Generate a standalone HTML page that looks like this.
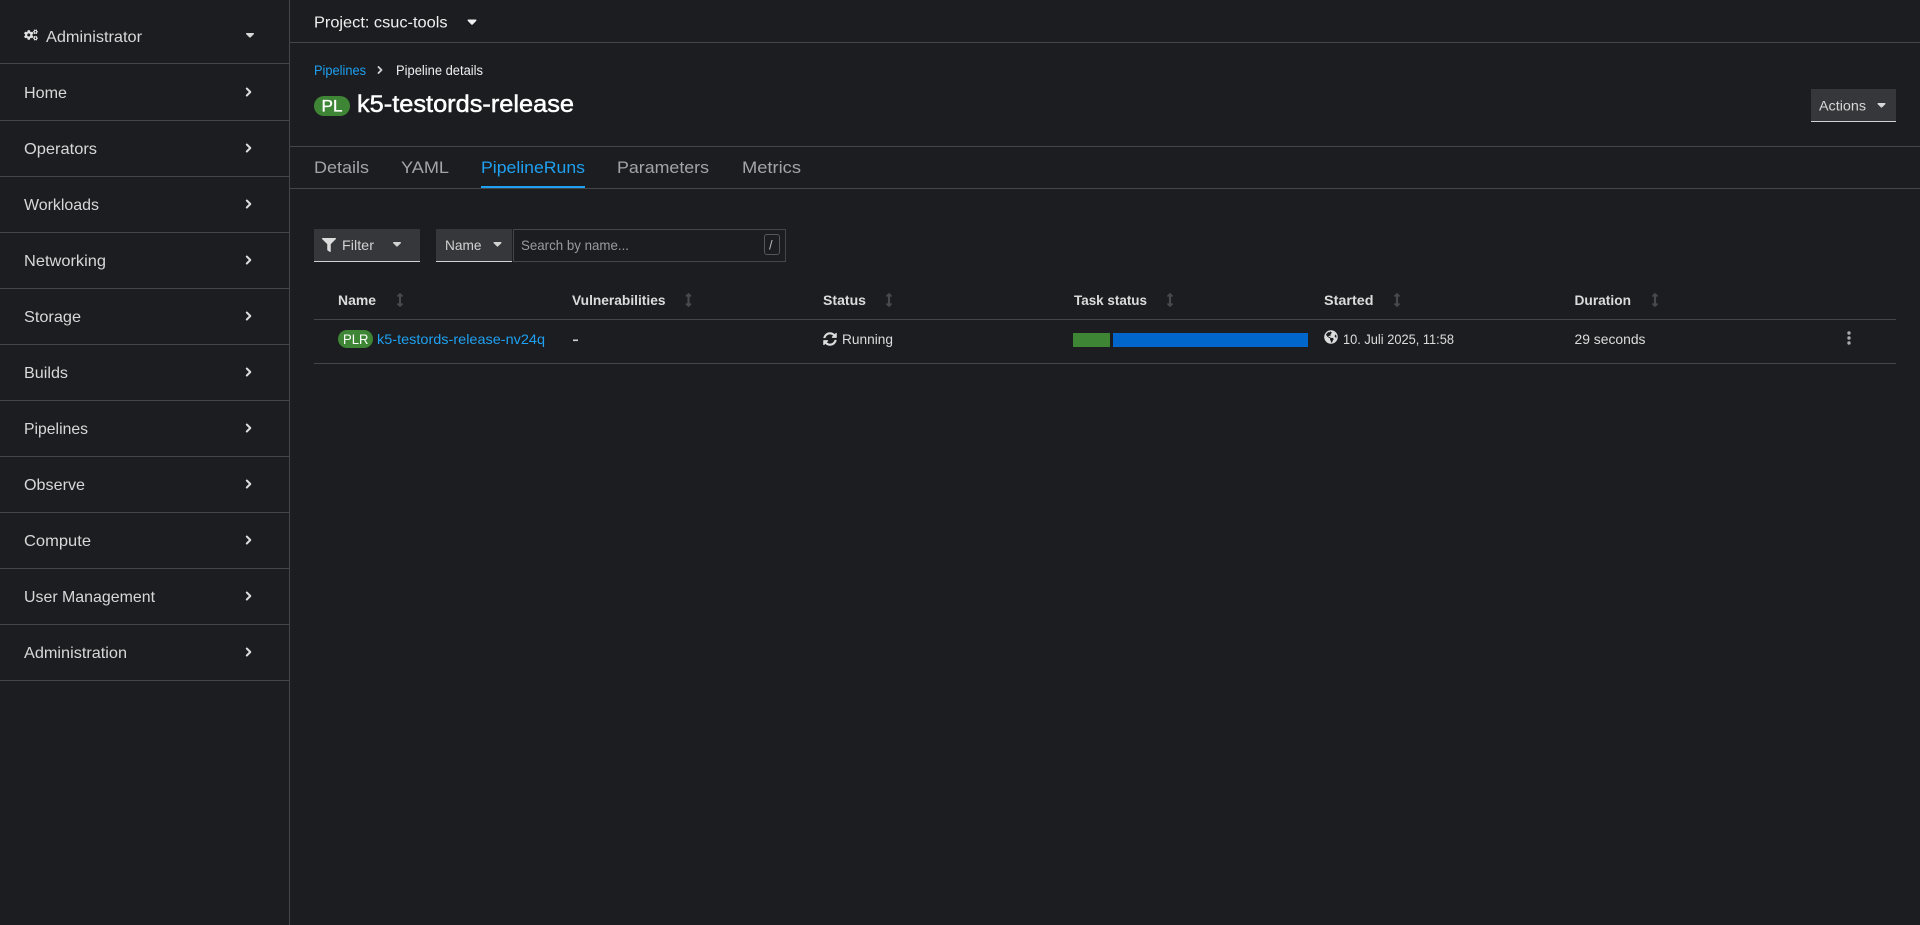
<!DOCTYPE html>
<html lang="en">
<head>
<meta charset="utf-8">
<title>k5-testords-release · Pipeline details</title>
<style>
html,body{margin:0;padding:0;background:#1b1d21;width:1920px;height:925px;overflow:hidden}
svg{display:block}
text{font-family:"Liberation Sans",sans-serif;font-size:16px;fill:#dcdcdc}
.nav{font-size:16px;fill:#d8d8d8}
.tab{font-size:17px;fill:#a3a4a6}
.th{font-size:13.5px;font-weight:700;fill:#dcdcdc}
.td{font-size:14px;fill:#dcdcdc}
.link{fill:#1fa0f0}
.line{stroke:#444548;stroke-width:1;fill:none;shape-rendering:crispEdges}
.chev{stroke:#dcdcdc;stroke-width:2;fill:none;stroke-linecap:round;stroke-linejoin:round}
</style>
</head>
<body>
<svg width="1920" height="925" viewBox="0 0 1920 925" xmlns="http://www.w3.org/2000/svg">
<defs>
<symbol id="caret" viewBox="0 0 10 6"><path d="M.9 0h8.2c.8 0 1.2 1 .6 1.500L5.600 5.700c-.3.4-.9.4-1.200 0L.3 1.500C-.3 1 .1 0 .9 0z" fill="currentColor"/></symbol>
<symbol id="sort" viewBox="0 0 256 512"><path fill="currentColor" d="M214.059 377.941H168V134.059h46.059c21.382 0 32.09-25.851 16.971-40.971L144.971 7.029c-9.373-9.373-24.569-9.373-33.941 0L24.971 93.088c-15.119 15.119-4.411 40.971 16.971 40.971H88v243.882H41.941c-21.382 0-32.09 25.851-16.971 40.971l86.059 86.059c9.373 9.373 24.569 9.373 33.941 0l86.059-86.059c15.12-15.119 4.412-40.971-16.97-40.971z"/></symbol>
<symbol id="cogs" viewBox="0 0 640 512"><path fill="currentColor" d="M512.1 191l-8.2 14.3c-3 5.3-9.4 7.5-15.1 5.4-11.8-4.4-22.6-10.7-32.1-18.6-4.6-3.8-5.8-10.5-2.8-15.7l8.2-14.3c-6.9-8-12.3-17.3-15.9-27.4h-16.5c-6 0-11.2-4.3-12.2-10.3-2-12-2.1-24.6 0-37.1 1-6 6.2-10.4 12.2-10.4h16.5c3.6-10.1 9-19.4 15.9-27.4l-8.2-14.3c-3-5.2-1.9-11.9 2.8-15.7 9.5-7.9 20.4-14.2 32.1-18.6 5.7-2.1 12.1.1 15.1 5.4l8.2 14.3c10.5-1.9 21.2-1.9 31.7 0L552 6.3c3-5.3 9.4-7.5 15.1-5.4 11.8 4.4 22.6 10.7 32.1 18.6 4.6 3.8 5.8 10.5 2.8 15.7l-8.2 14.3c6.9 8 12.3 17.3 15.9 27.4h16.5c6 0 11.2 4.3 12.2 10.3 2 12 2.1 24.6 0 37.1-1 6-6.2 10.4-12.2 10.4h-16.5c-3.6 10.1-9 19.4-15.9 27.4l8.2 14.3c3 5.2 1.9 11.9-2.8 15.7-9.5 7.9-20.4 14.2-32.1 18.6-5.7 2.1-12.1-.1-15.1-5.4l-8.2-14.3c-10.4 1.9-21.2 1.9-31.7 0zm-10.5-58.8c38.5 29.6 82.4-14.3 52.8-52.8-38.5-29.7-82.4 14.3-52.8 52.8zM386.3 286.1l33.7 16.8c10.1 5.8 14.5 18.1 10.5 29.1-8.9 24.2-26.4 46.4-42.6 65.8-7.4 8.9-20.2 11.1-30.3 5.3l-29.1-16.8c-16 13.7-34.6 24.6-54.9 31.7v33.6c0 11.6-8.3 21.6-19.7 23.6-24.6 4.2-50.4 4.4-75.9 0-11.5-2-20-11.9-20-23.6V418c-20.3-7.2-38.9-18-54.9-31.7L74 403c-10 5.8-22.9 3.6-30.3-5.3-16.2-19.4-33.3-41.6-42.2-65.7-4-10.9.4-23.2 10.5-29.1l33.3-16.8c-3.9-20.9-3.9-42.4 0-63.4L12 205.8c-10.1-5.8-14.6-18.1-10.5-29 8.9-24.2 26-46.4 42.2-65.8 7.4-8.9 20.2-11.1 30.3-5.3l29.1 16.8c16-13.7 34.6-24.6 54.9-31.7V57.1c0-11.5 8.2-21.5 19.6-23.5 24.6-4.2 50.5-4.4 76-.1 11.5 2 20 11.9 20 23.6v33.6c20.3 7.2 38.9 18 54.9 31.7l29.1-16.8c10-5.8 22.9-3.6 30.3 5.3 16.2 19.4 33.2 41.6 42.1 65.8 4 10.9.1 23.2-10 29.1l-33.7 16.8c3.9 21 3.9 42.5 0 63.5zm-117.6 21.1c59.2-77-28.7-164.9-105.7-105.7-59.2 77 28.7 164.9 105.7 105.7zm243.4 182.7l-8.2 14.3c-3 5.3-9.4 7.5-15.1 5.4-11.8-4.4-22.6-10.7-32.1-18.6-4.6-3.8-5.8-10.5-2.8-15.7l8.2-14.3c-6.9-8-12.3-17.3-15.9-27.4h-16.5c-6 0-11.2-4.3-12.2-10.3-2-12-2.1-24.6 0-37.1 1-6 6.2-10.4 12.2-10.4h16.5c3.6-10.1 9-19.4 15.9-27.4l-8.2-14.3c-3-5.2-1.9-11.9 2.8-15.7 9.5-7.9 20.4-14.2 32.1-18.6 5.7-2.1 12.1.1 15.1 5.4l8.2 14.3c10.5-1.9 21.2-1.9 31.7 0l8.2-14.3c3-5.3 9.4-7.5 15.1-5.4 11.8 4.4 22.6 10.7 32.1 18.6 4.6 3.8 5.8 10.5 2.8 15.7l-8.2 14.3c6.9 8 12.3 17.3 15.9 27.4h16.5c6 0 11.2 4.3 12.2 10.3 2 12 2.1 24.6 0 37.1-1 6-6.2 10.4-12.2 10.4h-16.5c-3.6 10.1-9 19.4-15.9 27.4l8.2 14.3c3 5.2 1.9 11.9-2.8 15.7-9.5 7.9-20.4 14.2-32.1 18.6-5.7 2.1-12.1-.1-15.1-5.4l-8.2-14.3c-10.4 1.9-21.2 1.9-31.7 0zM501.6 431c38.5 29.6 82.4-14.3 52.8-52.8-38.5-29.6-82.4 14.3-52.8 52.8z"/></symbol>
</defs>

<!-- Sidebar -->
<g>
<line class="line" x1="289.5" y1="0" x2="289.5" y2="925"/>
<line class="line" x1="0" y1="63.5" x2="289" y2="63.5"/>
<line class="line" x1="0" y1="120.5" x2="289" y2="120.5"/>
<line class="line" x1="0" y1="176.5" x2="289" y2="176.5"/>
<line class="line" x1="0" y1="232.5" x2="289" y2="232.5"/>
<line class="line" x1="0" y1="288.5" x2="289" y2="288.5"/>
<line class="line" x1="0" y1="344.5" x2="289" y2="344.5"/>
<line class="line" x1="0" y1="400.5" x2="289" y2="400.5"/>
<line class="line" x1="0" y1="456.5" x2="289" y2="456.5"/>
<line class="line" x1="0" y1="512.5" x2="289" y2="512.5"/>
<line class="line" x1="0" y1="568.5" x2="289" y2="568.5"/>
<line class="line" x1="0" y1="624.5" x2="289" y2="624.5"/>
<line class="line" x1="0" y1="680.5" x2="289" y2="680.5"/>

<use href="#cogs" x="24" y="29.5" width="14" height="11" color="#e0e0e0"/>
<text class="nav" x="46" y="42" textLength="96" lengthAdjust="spacingAndGlyphs">Administrator</text>
<use href="#caret" x="246" y="33" width="8" height="4.800" color="#d8d8d8"/>

<text class="nav" x="24" y="98" textLength="43" lengthAdjust="spacingAndGlyphs">Home</text>
<text class="nav" x="24" y="154" textLength="73" lengthAdjust="spacingAndGlyphs">Operators</text>
<text class="nav" x="24" y="210" textLength="75" lengthAdjust="spacingAndGlyphs">Workloads</text>
<text class="nav" x="24" y="266" textLength="82" lengthAdjust="spacingAndGlyphs">Networking</text>
<text class="nav" x="24" y="322" textLength="57" lengthAdjust="spacingAndGlyphs">Storage</text>
<text class="nav" x="24" y="378" textLength="44" lengthAdjust="spacingAndGlyphs">Builds</text>
<text class="nav" x="24" y="434" textLength="64" lengthAdjust="spacingAndGlyphs">Pipelines</text>
<text class="nav" x="24" y="490" textLength="61" lengthAdjust="spacingAndGlyphs">Observe</text>
<text class="nav" x="24" y="546" textLength="67" lengthAdjust="spacingAndGlyphs">Compute</text>
<text class="nav" x="24" y="602" textLength="131" lengthAdjust="spacingAndGlyphs">User Management</text>
<text class="nav" x="24" y="658" textLength="103" lengthAdjust="spacingAndGlyphs">Administration</text>

<polyline class="chev" points="246.800,88.500 250.300,92 246.800,95.500"/>
<polyline class="chev" points="246.800,144.500 250.300,148 246.800,151.500"/>
<polyline class="chev" points="246.800,200.500 250.300,204 246.800,207.500"/>
<polyline class="chev" points="246.800,256.500 250.300,260 246.800,263.500"/>
<polyline class="chev" points="246.800,312.500 250.300,316 246.800,319.500"/>
<polyline class="chev" points="246.800,368.500 250.300,372 246.800,375.500"/>
<polyline class="chev" points="246.800,424.500 250.300,428 246.800,431.500"/>
<polyline class="chev" points="246.800,480.500 250.300,484 246.800,487.500"/>
<polyline class="chev" points="246.800,536.500 250.300,540 246.800,543.500"/>
<polyline class="chev" points="246.800,592.500 250.300,596 246.800,599.500"/>
<polyline class="chev" points="246.800,648.500 250.300,652 246.800,655.500"/>
</g>

<!-- Project bar -->
<text x="314" y="27.500" textLength="133.500" lengthAdjust="spacingAndGlyphs" style="fill:#f0f0f0">Project: csuc-tools</text>
<use href="#caret" x="467.500" y="19.500" width="9" height="5.400" color="#f0f0f0"/>
<line class="line" x1="290" y1="42.500" x2="1920" y2="42.500"/>

<!-- Breadcrumb and title -->
<text class="link" x="314" y="75" style="font-size:13.500px" textLength="52" lengthAdjust="spacingAndGlyphs">Pipelines</text>
<polyline class="chev" style="stroke:#d2d2d2;stroke-width:1.800" points="378.500,67 381.500,70 378.500,73"/>
<text x="396" y="75" style="font-size:13.500px;fill:#f0f0f0" textLength="87" lengthAdjust="spacingAndGlyphs">Pipeline details</text>

<rect x="314" y="96" width="36" height="20" rx="10" fill="#3e8635"/>
<text x="321.500" y="111.500" style="font-size:16.500px;fill:#fff;stroke:#fff;stroke-width:.3" textLength="21" lengthAdjust="spacingAndGlyphs">PL</text>
<text x="357" y="112" style="font-size:24px;fill:#fff;stroke:#fff;stroke-width:.5" textLength="217" lengthAdjust="spacingAndGlyphs">k5-testords-release</text>

<!-- Actions -->
<rect x="1811" y="89" width="85" height="33" fill="#36373a"/>
<rect x="1811" y="121" width="85" height="1" fill="#d2d2d2"/>
<text x="1819" y="110.500" style="font-size:14px;fill:#d8d8d8" textLength="47" lengthAdjust="spacingAndGlyphs">Actions</text>
<use href="#caret" x="1877.500" y="103" width="8" height="4.800" color="#d8d8d8"/>

<line class="line" x1="290" y1="146.500" x2="1920" y2="146.500"/>

<!-- Tabs -->
<text class="tab" x="314" y="173" textLength="55" lengthAdjust="spacingAndGlyphs">Details</text>
<text class="tab" x="401" y="173" textLength="48" lengthAdjust="spacingAndGlyphs">YAML</text>
<text class="tab" x="481" y="173" style="fill:#1fa0f0" textLength="104" lengthAdjust="spacingAndGlyphs">PipelineRuns</text>
<text class="tab" x="617" y="173" textLength="92" lengthAdjust="spacingAndGlyphs">Parameters</text>
<text class="tab" x="742" y="173" textLength="59" lengthAdjust="spacingAndGlyphs">Metrics</text>
<line class="line" x1="290" y1="188.500" x2="1920" y2="188.500"/>
<rect x="481" y="186" width="104" height="2" fill="#1fa0f0"/>

<!-- Toolbar -->
<rect x="314" y="229" width="106" height="33" fill="#36373a"/>
<rect x="314" y="261" width="106" height="1" fill="#d2d2d2"/>
<svg x="322" y="238" width="14" height="14" viewBox="0 0 512 512"><path fill="#dcdcdc" d="M487.976 0H24.028C2.71 0-8.047 25.866 7.058 40.971L192 225.941V432c0 7.831 3.821 15.17 10.237 19.662l80 55.98C298.02 518.69 320 507.493 320 487.98V225.941l184.947-184.97C520.021 25.896 509.338 0 487.976 0z"/></svg>
<text x="342" y="250" style="font-size:14px;fill:#d2d2d2" textLength="32" lengthAdjust="spacingAndGlyphs">Filter</text>
<use href="#caret" x="393" y="242" width="8" height="4.800" color="#d2d2d2"/>

<rect x="436" y="229" width="76" height="33" fill="#36373a"/>
<rect x="436" y="261" width="76" height="1" fill="#d2d2d2"/>
<text x="445" y="250" style="font-size:14px;fill:#d2d2d2" textLength="36.500" lengthAdjust="spacingAndGlyphs">Name</text>
<use href="#caret" x="493.500" y="242" width="8" height="4.800" color="#d2d2d2"/>

<rect x="513.500" y="229.500" width="272" height="32" fill="none" stroke="#444548"/>
<text x="521" y="250" style="font-size:14px;fill:#9a9b9d" textLength="108" lengthAdjust="spacingAndGlyphs">Search by name...</text>
<rect x="764.500" y="234.500" width="15" height="20" rx="2.500" fill="none" stroke="#55585b"/>
<text x="769" y="249.500" style="font-size:13px;fill:#b8bbbe">/</text>

<!-- Table header -->
<text class="th" x="338" y="305" textLength="38" lengthAdjust="spacingAndGlyphs">Name</text>
<use href="#sort" x="396.500" y="293" width="7" height="14" color="#47494c"/>
<text class="th" x="572" y="305" textLength="93.500" lengthAdjust="spacingAndGlyphs">Vulnerabilities</text>
<use href="#sort" x="685" y="293" width="7" height="14" color="#47494c"/>
<text class="th" x="823" y="305" textLength="43" lengthAdjust="spacingAndGlyphs">Status</text>
<use href="#sort" x="885.500" y="293" width="7" height="14" color="#47494c"/>
<text class="th" x="1074" y="305" textLength="73" lengthAdjust="spacingAndGlyphs">Task status</text>
<use href="#sort" x="1166.500" y="293" width="7" height="14" color="#47494c"/>
<text class="th" x="1324" y="305" textLength="49.500" lengthAdjust="spacingAndGlyphs">Started</text>
<use href="#sort" x="1393.500" y="293" width="7" height="14" color="#47494c"/>
<text class="th" x="1574.500" y="305" textLength="56.500" lengthAdjust="spacingAndGlyphs">Duration</text>
<use href="#sort" x="1651.500" y="293" width="7" height="14" color="#47494c"/>
<line class="line" x1="314" y1="319.500" x2="1896" y2="319.500"/>

<!-- Table row -->
<rect x="338" y="330" width="35" height="18" rx="9" fill="#3e8635"/>
<text x="343" y="344" style="font-size:14px;fill:#fff" textLength="25.500" lengthAdjust="spacingAndGlyphs">PLR</text>
<text class="td link" x="377" y="344" textLength="168" lengthAdjust="spacingAndGlyphs">k5-testords-release-nv24q</text>
<rect x="573" y="339.500" width="5" height="1.600" fill="#d2d2d2"/>

<svg x="823" y="332" width="14" height="14" viewBox="0 0 512 512"><path fill="#dcdcdc" d="M370.72 133.28C339.458 104.008 298.888 87.962 255.848 88c-77.458.068-144.328 53.178-162.791 126.85-1.344 5.363-6.122 9.15-11.651 9.15H24.103c-7.498 0-13.194-6.807-11.807-14.176C33.933 94.924 134.813 8 256 8c66.448 0 126.791 26.136 171.315 68.685L463.03 40.97C478.149 25.851 504 36.559 504 57.941V192c0 13.255-10.745 24-24 24H345.941c-21.382 0-32.09-25.851-16.971-40.971l41.75-41.749zM32 296h134.059c21.382 0 32.09 25.851 16.971 40.971l-41.75 41.75c31.262 29.273 71.835 45.319 114.876 45.28 77.418-.07 144.315-53.144 162.787-126.849 1.344-5.363 6.122-9.15 11.651-9.15h57.304c7.498 0 13.194 6.807 11.807 14.176C478.067 417.076 377.187 504 256 504c-66.448 0-126.791-26.136-171.315-68.685L48.97 471.03C33.851 486.149 8 475.441 8 454.059V320c0-13.255 10.745-24 24-24z"/></svg>
<text class="td" x="842" y="344" textLength="51" lengthAdjust="spacingAndGlyphs">Running</text>

<rect x="1073" y="333" width="37" height="14" fill="#3e8635"/>
<rect x="1113" y="333" width="195" height="14" fill="#06c"/>

<svg x="1324" y="330" width="14" height="14" viewBox="0 0 496 512"><path fill="#dcdcdc" d="M248 8C111.03 8 0 119.03 0 256s111.03 248 248 248 248-111.03 248-248S384.97 8 248 8zm82.29 357.6c-3.9 3.88-7.99 7.95-11.31 11.28-2.99 3-5.1 6.7-6.17 10.71-1.51 5.66-2.73 11.38-4.77 16.87l-17.39 46.85c-13.76 3-28 4.69-42.65 4.69v-27.38c1.69-12.62-7.64-36.26-22.63-51.25-6-6-9.37-14.14-9.37-22.63v-32.01c0-11.64-6.27-22.34-16.46-27.97-14.37-7.95-34.81-19.06-48.81-26.11-11.48-5.78-22.1-13.14-31.65-21.75l-.8-.72a114.792 114.792 0 0 1-18.06-20.74c-9.38-13.77-24.66-36.42-34.59-51.14 20.47-45.5 57.36-82.04 103.2-101.89l24.01 12.01C203.48 89.74 216 82.01 216 70.11v-11.3c7.99-1.29 16.12-2.11 24.39-2.42l28.3 28.3c6.25 6.25 6.25 16.38 0 22.63L264 112l-10.34 10.34c-3.12 3.12-3.12 8.19 0 11.31l4.69 4.69c3.12 3.12 3.12 8.19 0 11.31l-8 8a8.008 8.008 0 0 1-5.66 2.34h-8.99c-2.08 0-4.08.81-5.58 2.27l-9.92 9.65a8.008 8.008 0 0 0-1.58 9.31l15.59 31.19c2.66 5.32-1.21 11.58-7.15 11.58h-5.64c-1.93 0-3.79-.7-5.24-1.96l-9.28-8.06a16.017 16.017 0 0 0-15.55-3.1l-31.17 10.39a11.95 11.95 0 0 0-8.17 11.34c0 4.53 2.56 8.66 6.61 10.69l11.08 5.54c9.41 4.71 19.79 7.16 30.31 7.16s22.59 27.29 32 32h66.75c8.49 0 16.62 3.37 22.63 9.37l13.69 13.69a30.503 30.503 0 0 1 8.93 21.57 46.536 46.536 0 0 1-13.72 32.98zM417 274.25c-5.79-1.45-10.84-5-14.15-9.97l-17.98-26.97a23.97 23.97 0 0 1 0-26.62l19.59-29.38c2.32-3.47 5.5-6.29 9.24-8.15l12.98-6.49C440.2 193.59 448 223.87 448 256c0 8.67-.74 17.16-1.82 25.54L417 274.25z"/></svg>
<text class="td" x="1343" y="344" textLength="111" lengthAdjust="spacingAndGlyphs">10. Juli 2025, 11:58</text>
<text class="td" x="1574.500" y="344" textLength="71" lengthAdjust="spacingAndGlyphs">29 seconds</text>

<circle cx="1849" cy="333" r="1.700" fill="#a8a9ab"/>
<circle cx="1849" cy="338" r="1.700" fill="#a8a9ab"/>
<circle cx="1849" cy="343" r="1.700" fill="#a8a9ab"/>
<line class="line" x1="314" y1="363.500" x2="1896" y2="363.500"/>
</svg>
</body>
</html>
